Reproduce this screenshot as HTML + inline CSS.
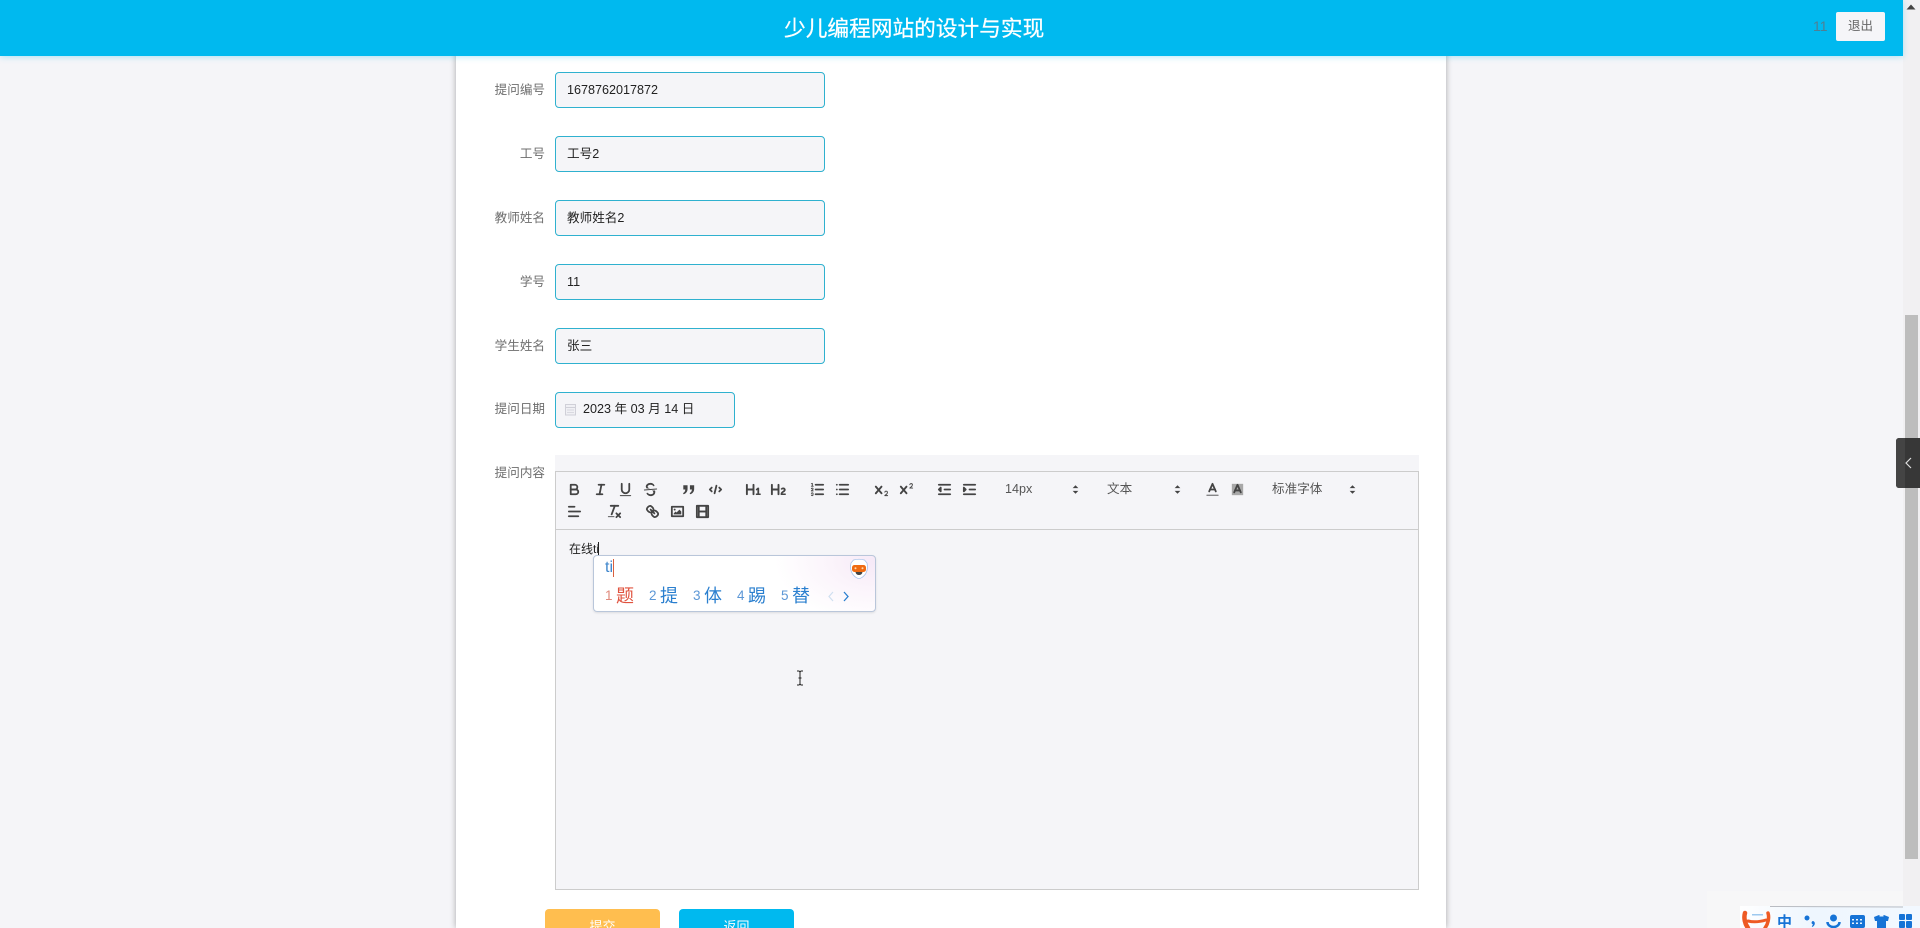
<!DOCTYPE html>
<html lang="zh-CN">
<head>
<meta charset="utf-8">
<title>少儿编程网站的设计与实现</title>
<style>
html,body{margin:0;padding:0;width:1920px;height:928px;overflow:hidden;background:#f5f5f8;}
body{position:relative;font-family:"Liberation Sans","Noto Sans CJK SC",sans-serif;}
.a{position:absolute;}
#hdr{left:0;top:0;width:1903px;height:56px;background:#00b9ef;box-shadow:0 1px 6px rgba(0,185,239,.3);z-index:5;}
#ttl{left:784px;top:14px;width:264px;height:30px;line-height:30px;font-size:21.7px;color:#fff;white-space:nowrap;-webkit-text-stroke:.25px #fff;}
#uid{left:1813px;top:17px;font-size:14px;line-height:18px;color:#4f7f94;}
#out{left:1836px;top:12px;width:49px;height:29px;background:#f5f5f8;border-radius:2px;text-align:center;line-height:29px;font-size:12.5px;color:#666;}
#panel{left:456px;top:0;width:990px;height:928px;background:#fff;box-shadow:0 0 6px rgba(0,0,0,.32);}
.lb{width:60px;left:485px;text-align:right;font-size:12.6px;line-height:18px;color:#6e6e6e;white-space:nowrap;}
.in{left:555px;width:270px;height:36px;box-sizing:border-box;background:#f5f5f8;border:1px solid #2fb1cf;border-radius:4px;font-size:12.6px;line-height:34px;color:#222;padding-left:11px;white-space:nowrap;}
#ed0{left:555px;top:455px;width:864px;height:16px;background:#f5f5f8;}
#ed{left:555px;top:471px;width:864px;height:419px;box-sizing:border-box;background:#f5f5f8;border:1px solid #ccc;}
#div{left:555px;top:529px;width:864px;height:1px;background:#ccc;}
svg.i{position:absolute;width:17px;height:17px;overflow:visible;}
svg.i .s{fill:none;stroke:#444;stroke-width:1.9;stroke-linecap:round;stroke-linejoin:round;}
svg.i .t{fill:none;stroke:#444;stroke-width:1;stroke-linecap:round;}
svg.i .f{fill:#444;stroke:none;}
.tx{font-size:12.6px;line-height:16px;color:#555;white-space:nowrap;}
#etx{left:569px;top:541px;font-size:12px;line-height:16px;color:#222;white-space:nowrap;}
#ime{left:593px;top:555px;width:283px;height:57px;box-sizing:border-box;border:1px solid #b9c6da;border-radius:4px;background:radial-gradient(ellipse 100px 60px at 100% 10%,#f6e9f7 0%,#fbf4fb 45%,#fff 100%);box-shadow:0 1px 2px rgba(0,0,0,.1);z-index:3;}
.n{font-size:13.5px;line-height:20px;color:#5c97d6;white-space:nowrap;}
.c{font-size:18px;line-height:22px;color:#2a7fcf;white-space:nowrap;}
.btn{top:909px;width:115px;height:40px;border-radius:4px;text-align:center;color:#fff;font-size:13px;line-height:36px;}
#sb{left:1903px;top:0;width:17px;height:928px;background:#f1f0f2;}
#th{left:1905px;top:315px;width:13px;height:544px;background:#bdbdbd;}
#tab{left:1896px;top:438px;width:24px;height:50px;background:#373737;border-radius:3px 0 0 3px;z-index:6;}
#tab2{left:1896px;top:438px;width:9px;height:50px;background:#444;border-radius:3px 0 0 3px;z-index:6;}
#bar0{left:1707px;top:891px;width:196px;height:37px;background:#f7f7f8;}
#bar{left:1740px;top:906px;width:180px;height:22px;overflow:hidden;background:linear-gradient(90deg,#fff,#eef6fe 40%,#f2f8ff);box-sizing:border-box;z-index:7;}
</style>
</head>
<body>
<div class="a" id="panel"></div>

<div class="a" id="hdr"></div>
<div class="a" id="ttl" style="z-index:6">少儿编程网站的设计与实现</div>
<div class="a" id="uid" style="z-index:6">11</div>
<div class="a" id="out" style="z-index:6">退出</div>

<div class="a lb" style="top:81px">提问编号</div>
<div class="a in" style="top:72px">1678762017872</div>
<div class="a lb" style="top:145px">工号</div>
<div class="a in" style="top:136px">工号2</div>
<div class="a lb" style="top:209px">教师姓名</div>
<div class="a in" style="top:200px">教师姓名2</div>
<div class="a lb" style="top:273px">学号</div>
<div class="a in" style="top:264px">11</div>
<div class="a lb" style="top:337px">学生姓名</div>
<div class="a in" style="top:328px">张三</div>
<div class="a lb" style="top:400px">提问日期</div>
<div class="a in" style="top:392px;width:180px;padding-left:27px;line-height:33px">2023 年 03 月 14 日</div>
<svg class="a" style="left:564px;top:403px" width="13" height="13" viewBox="0 0 13 13"><rect x="1.500" y="1.500" width="10" height="10.500" fill="#f0f0f4" stroke="#d0d0d8"/><line x1="1" y1="4.500" x2="12" y2="4.500" stroke="#d0d0d8"/><line x1="3" y1="7" x2="10" y2="7" stroke="#d9d9e0"/><line x1="3" y1="9.500" x2="10" y2="9.500" stroke="#d9d9e0"/></svg>
<div class="a lb" style="top:464px">提问内容</div>

<div class="a" id="ed0"></div>
<div class="a" id="ed"></div>
<div class="a" id="div"></div>

<!-- toolbar row 1 -->
<svg class="i" style="left:565.5px;top:480.5px" viewBox="0 0 18 18"><path class="s" d="M5,4H9.5A2.5,2.5,0,0,1,12,6.5v0A2.5,2.5,0,0,1,9.5,9H5V4Z"/><path class="s" d="M5,9h5.5A2.5,2.5,0,0,1,13,11.5v0A2.5,2.5,0,0,1,10.5,14H5V9Z"/></svg>
<svg class="i" style="left:591.5px;top:480.5px" viewBox="0 0 18 18"><line class="s" x1="7" x2="13" y1="4" y2="4"/><line class="s" x1="5" x2="11" y1="14" y2="14"/><line class="s" x1="8" x2="10" y1="14" y2="4"/></svg>
<svg class="i" style="left:617px;top:480.5px" viewBox="0 0 18 18"><path class="s" d="M5,3V9a4,4,0,0,0,4,4H9a4,4,0,0,0,4-4V3"/><rect class="f" height="1" rx=".5" ry=".5" width="12" x="3" y="15"/></svg>
<svg class="i" style="left:641.5px;top:480.5px" viewBox="0 0 18 18"><line class="t" x1="15.5" x2="2.5" y1="8.5" y2="9.5"/><path class="f" d="M9.007,8C6.542,7.471,6,6.785,6,6S7.007,4,9,4c1.327,0,2.25.392,2.7,1.1.206.325.644.736,1.18.3.454-.369.309-.9.1-1.2C12.25,3.09,10.9,2,9,2,6.3,2,4,3.7,4,6a3.47,3.47,0,0,0,.94,2Z"/><path class="f" d="M12.783,10H10.6A2.3,2.3,0,0,1,12,12c0,1.1-1.007,2-3,2a3.2,3.2,0,0,1-2.7-1.1c-.206-.325-.644-.736-1.18-.3-.454.369-.309.9-.1,1.2C5.75,14.91,7.1,16,9,16c2.7,0,5-1.7,5-4a3.47,3.47,0,0,0-.217-2Z"/></svg>
<svg class="i" style="left:680px;top:480.5px" viewBox="0 0 18 18"><path class="f" d="M3.500,4.500H8V8.500C8,11.500,6,13.500,3.800,14L3.200,12.800C4.700,12.200,5.500,11,5.600,9H3.500Z"/><path class="f" d="M10.500,4.500H15V8.500C15,11.500,13,13.500,10.800,14L10.200,12.800C11.700,12.200,12.500,11,12.600,9H10.500Z"/></svg>
<svg class="i" style="left:706.5px;top:480.5px" viewBox="0 0 18 18"><polyline class="s" points="5 7 3 9 5 11"/><polyline class="s" points="13 7 15 9 13 11"/><line class="s" x1="10" x2="8" y1="5" y2="13"/></svg>
<svg class="i" style="left:744.5px;top:480.5px" viewBox="0 0 18 18"><path class="f" d="M10,4V14a1,1,0,0,1-2,0V10H3v4a1,1,0,0,1-2,0V4A1,1,0,0,1,3,4V8H8V4a1,1,0,0,1,2,0Zm6.06787,9.209H14.98975V7.59863a.54085.54085,0,0,0-.605-.60547h-.62744a1.01119,1.01119,0,0,0-.748.29688L11.645,8.56641a.5435.5435,0,0,0-.022.8584l.28613.30762a.53861.53861,0,0,0,.84717.0332l.09912-.08789a1.2137,1.2137,0,0,0,.2417-.35254h.02246s-.01123.30859-.01123.60547V13.209H12.041a.54085.54085,0,0,0-.605.60547v.43945a.54085.54085,0,0,0,.605.60547h4.02686a.54085.54085,0,0,0,.605-.60547v-.43945A.54085.54085,0,0,0,16.06787,13.209Z"/></svg>
<svg class="i" style="left:770px;top:480.5px" viewBox="0 0 18 18"><path class="f" d="M16.73975,13.81445v.43945a.54085.54085,0,0,1-.605.60547H11.855a.58392.58392,0,0,1-.64893-.60547V14.0127c0-2.90527,3.39941-3.42187,3.39941-4.55469a.77675.77675,0,0,0-.84717-.78125,1.17684,1.17684,0,0,0-.83594.38477c-.2749.26367-.561.374-.85791.13184l-.4292-.34082c-.30811-.24219-.38525-.51758-.1543-.81445a2.97155,2.97155,0,0,1,2.45361-1.17676,2.45393,2.45393,0,0,1,2.68408,2.40918c0,2.45312-3.1792,2.92676-3.27832,3.93848h2.79443A.54085.54085,0,0,1,16.73975,13.81445ZM9,3A.99974.99974,0,0,0,8,4V8H3V4A1,1,0,0,0,1,4V14a1,1,0,0,0,2,0V10H8v4a1,1,0,0,0,2,0V4A.99974.99974,0,0,0,9,3Z"/></svg>
<svg class="i" style="left:808.5px;top:480.5px" viewBox="0 0 18 18"><line class="s" x1="7" x2="15" y1="4" y2="4"/><line class="s" x1="7" x2="15" y1="9" y2="9"/><line class="s" x1="7" x2="15" y1="14" y2="14"/><line class="t" x1="2.5" x2="4.5" y1="5.5" y2="5.5"/><path class="f" d="M3.5,6A0.5,0.5,0,0,1,3,5.5V3.085l-0.276.138A0.5,0.5,0,0,1,2.053,3c-0.124-.247-0.023-0.324.224-0.447l1-.5A0.5,0.5,0,0,1,4,2.5v3A0.5,0.5,0,0,1,3.5,6Z"/><path class="t" d="M4.5,10.5h-2c0-.234,1.85-1.076,1.85-2.234A0.959,0.959,0,0,0,2.5,8.156"/><path class="t" d="M2.5,14.846a0.959,0.959,0,0,0,1.85-.109A0.7,0.7,0,0,0,3.75,14a0.688,0.688,0,0,0,.6-0.736,0.959,0.959,0,0,0-1.85-.109"/></svg>
<svg class="i" style="left:833.5px;top:480.5px" viewBox="0 0 18 18"><line class="s" x1="6" x2="15" y1="4" y2="4"/><line class="s" x1="6" x2="15" y1="9" y2="9"/><line class="s" x1="6" x2="15" y1="14" y2="14"/><line class="s" x1="3" x2="3" y1="4" y2="4"/><line class="s" x1="3" x2="3" y1="9" y2="9"/><line class="s" x1="3" x2="3" y1="14" y2="14"/></svg>
<svg class="i" style="left:872.5px;top:480.5px" viewBox="0 0 18 18"><path class="f" d="M15.5,15H13.861a3.858,3.858,0,0,0,1.914-2.975,1.8,1.8,0,0,0-1.6-1.751A1.921,1.921,0,0,0,12.021,11.7a0.50013,0.50013,0,1,0,.957.291h0a0.914,0.914,0,0,1,1.053-.725,0.81,0.81,0,0,1,.744.762c0,1.076-1.16971,1.86982-1.93971,2.43082A1.45639,1.45639,0,0,0,12,15.5a0.5,0.5,0,0,0,.5.5h3A0.5,0.5,0,0,0,15.5,15Z"/><path class="f" d="M9.65,5.241a1,1,0,0,0-1.409.108L6,7.964,3.759,5.349A1,1,0,0,0,2.192,6.59178Q2.21541,6.6213,2.241,6.649L4.684,9.5,2.241,12.35A1,1,0,0,0,3.71,13.70722q0.02557-.02768.049-0.05722L6,11.036,8.241,13.65a1,1,0,1,0,1.567-1.24277Q9.78459,12.3777,9.759,12.35L7.316,9.5,9.759,6.651A1,1,0,0,0,9.65,5.241Z"/></svg>
<svg class="i" style="left:897.5px;top:480.5px" viewBox="0 0 18 18"><path class="f" d="M15.5,7H13.861a4.015,4.015,0,0,0,1.914-2.975,1.8,1.8,0,0,0-1.6-1.751A1.922,1.922,0,0,0,12.021,3.7a0.5,0.5,0,1,0,.957.291,0.917,0.917,0,0,1,1.053-.725,0.81,0.81,0,0,1,.744.762c0,1.077-1.164,1.925-1.934,2.486A1.423,1.423,0,0,0,12,7.5a0.5,0.5,0,0,0,.5.5h3A0.5,0.5,0,0,0,15.5,7Z"/><path class="f" d="M9.651,5.241a1,1,0,0,0-1.41.108L6,7.964,3.759,5.349a1,1,0,1,0-1.519,1.3L4.683,9.5,2.241,12.35a1,1,0,1,0,1.519,1.3L6,11.036,8.241,13.65a1,1,0,0,0,1.519-1.3L7.317,9.5,9.759,6.651A1,1,0,0,0,9.651,5.241Z"/></svg>
<svg class="i" style="left:936px;top:480.5px" viewBox="0 0 18 18"><line class="s" x1="3" x2="15" y1="14" y2="14"/><line class="s" x1="3" x2="15" y1="4" y2="4"/><line class="s" x1="9" x2="15" y1="9" y2="9"/><polyline class="s" style="fill:#444" points="5 7 5 11 3 9 5 7"/></svg>
<svg class="i" style="left:961px;top:480.5px" viewBox="0 0 18 18"><line class="s" x1="3" x2="15" y1="14" y2="14"/><line class="s" x1="3" x2="15" y1="4" y2="4"/><line class="s" x1="9" x2="15" y1="9" y2="9"/><polyline class="s" style="fill:#444" points="3 7 3 11 5 9 3 7"/></svg>

<div class="a tx" style="left:1005px;top:481px">14px</div>
<svg class="i" style="left:1066.5px;top:480.5px" viewBox="0 0 18 18"><polygon class="f" points="6 10.500 9 13.500 12 10.500"/><polygon class="f" points="6 7.500 9 4.500 12 7.500"/></svg>
<div class="a tx" style="left:1107px;top:481px">文本</div>
<svg class="i" style="left:1168.5px;top:480.5px" viewBox="0 0 18 18"><polygon class="f" points="6 10.500 9 13.500 12 10.500"/><polygon class="f" points="6 7.500 9 4.500 12 7.500"/></svg>
<svg class="i" style="left:1203.5px;top:480.5px" viewBox="0 0 18 18"><line class="t" x1="3" x2="15" y1="15" y2="15"/><polyline class="s" points="5.5 11 9 3 12.5 11"/><line class="s" x1="11.63" x2="6.38" y1="9" y2="9"/></svg>
<svg class="i" style="left:1228.5px;top:480.5px" viewBox="0 0 18 18"><rect x="3" y="3" width="12" height="12" fill="#a8a8a8"/><polyline class="s" points="5.500 12 9 4 12.500 12"/><line class="s" x1="11.63" x2="6.38" y1="10" y2="10"/></svg>
<div class="a tx" style="left:1272px;top:481px">标准字体</div>
<svg class="i" style="left:1343.5px;top:480.5px" viewBox="0 0 18 18"><polygon class="f" points="6 10.500 9 13.500 12 10.500"/><polygon class="f" points="6 7.500 9 4.500 12 7.500"/></svg>

<!-- toolbar row 2 -->
<svg class="i" style="left:565.5px;top:502.5px" viewBox="0 0 18 18"><line class="s" x1="3" x2="15" y1="9" y2="9"/><line class="s" x1="3" x2="13" y1="14" y2="14"/><line class="s" x1="3" x2="9" y1="4" y2="4"/></svg>
<svg class="i" style="left:606px;top:502.5px" viewBox="0 0 18 18"><line class="s" x1="5" x2="13" y1="3" y2="3"/><line class="s" x1="6" x2="9.35" y1="12" y2="3"/><line class="s" x1="11" x2="15" y1="11" y2="15"/><line class="s" x1="15" x2="11" y1="11" y2="15"/><rect class="f" height="1" rx=".5" ry=".5" width="7" x="2" y="14"/></svg>
<svg class="i" style="left:644px;top:502.5px" viewBox="0 0 18 18"><line class="s" x1="7" x2="11" y1="7" y2="11"/><path class="s" d="M8.9,4.577a3.476,3.476,0,0,1,.36,4.679A3.476,3.476,0,0,1,4.577,8.9C3.185,7.5,2.035,6.4,4.217,4.217S7.5,3.185,8.9,4.577Z"/><path class="s" d="M13.423,9.1a3.476,3.476,0,0,0-4.679-.36,3.476,3.476,0,0,0,.36,4.679c1.392,1.392,2.5,2.542,4.679.36S14.815,10.5,13.423,9.1Z"/></svg>
<svg class="i" style="left:669px;top:502.5px" viewBox="0 0 18 18"><rect class="s" height="10" width="12" x="3" y="4"/><circle class="f" cx="6" cy="7" r="1"/><polyline class="f" points="5 12 5 11 7 9 8 10 11 7 13 9 13 12 5 12"/></svg>
<svg class="i" style="left:694px;top:502.5px" viewBox="0 0 18 18"><rect class="s" height="12" width="12" x="3" y="3"/><rect class="f" height="12" width="2" x="4" y="3"/><rect class="f" height="12" width="2" x="12" y="3"/><rect class="f" height="2" width="8" x="5" y="8"/></svg>

<!-- editor text -->
<div class="a" id="etx">在线ti</div>
<div class="a" style="left:598px;top:542px;width:1px;height:15px;background:#222"></div>

<!-- IME popup -->
<div class="a" id="ime"></div>
<div class="a" style="left:605px;top:558px;font-size:16px;line-height:20px;color:#3f86cc;z-index:4">ti</div>
<div class="a" style="left:612.500px;top:559px;width:1px;height:18px;background:#d9603f;z-index:4"></div>
<svg class="a" style="left:849px;top:558px;z-index:4" width="20" height="22" viewBox="0 0 20 22"><path d="M2,5 L4.500,2 Q10,0.500 15.500,2 L18,5 Q19.500,11 16.500,16 Q13,20.500 10,20.500 Q7,20.500 3.500,16 Q0.500,11 2,5Z" fill="#fff" stroke="#a9c3ea" stroke-width=".8"/><rect x="3" y="7" width="14" height="7" rx="2.500" fill="#ef6a12"/><circle cx="6.500" cy="10.300" r="1" fill="#ffd9b0"/><circle cx="13.500" cy="10.300" r="1" fill="#ffd9b0"/><path d="M6.500,14 H13.500 Q13,17 10,17 Q7,17 6.500,14Z" fill="#444"/></svg>

<div class="a n" style="left:605px;top:586px;color:#e08a7c;z-index:4">1</div>
<div class="a c" style="left:616px;top:585px;color:#e0533f;z-index:4">题</div>
<div class="a n" style="left:649px;top:586px;z-index:4">2</div>
<div class="a c" style="left:660px;top:585px;z-index:4">提</div>
<div class="a n" style="left:693px;top:586px;z-index:4">3</div>
<div class="a c" style="left:704px;top:585px;z-index:4">体</div>
<div class="a n" style="left:737px;top:586px;z-index:4">4</div>
<div class="a c" style="left:748px;top:585px;z-index:4">踢</div>
<div class="a n" style="left:781px;top:586px;z-index:4">5</div>
<div class="a c" style="left:792px;top:585px;z-index:4">替</div>
<svg class="a" style="left:827px;top:591px;z-index:4" width="24" height="11" viewBox="0 0 24 11"><polyline points="6,1 2,5.500 6,10" fill="none" stroke="#cfdff0" stroke-width="1.2"/><polyline points="17,1 21,5.500 17,10" fill="none" stroke="#2a7fcf" stroke-width="1.3"/></svg>

<!-- I-beam cursor -->
<svg class="a" style="left:796px;top:670px" width="8" height="16" viewBox="0 0 8 16"><path d="M1,1H3L4,2L5,1H7M4,2V14M1,15H3L4,14L5,15H7M2.500,8H5.500" fill="none" stroke="#222" stroke-width="1"/></svg>

<!-- buttons -->
<div class="a btn" style="left:545px;background:#ffbe4f">提交</div>
<div class="a btn" style="left:679px;background:#00b9ef">返回</div>

<!-- scrollbar -->
<div class="a" id="sb"></div>
<div class="a" id="th"></div>
<svg class="a" style="left:1906px;top:4px" width="10" height="6" viewBox="0 0 10 6"><polygon points="5,0.500 9.500,5.500 0.500,5.500" fill="#444"/></svg>

<!-- side tab -->
<div class="a" id="tab"></div>
<div class="a" id="tab2"></div>
<svg class="a" style="left:1904px;top:457px;z-index:7" width="9" height="12" viewBox="0 0 9 12"><polyline points="7,1 2,6 7,11" fill="none" stroke="#ddd" stroke-width="1.2"/></svg>

<!-- IME status bar -->
<div class="a" id="bar0"></div>
<div class="a" id="bar"></div>
<svg class="a" style="left:1740px;top:906px;z-index:8" width="180" height="22" viewBox="0 0 180 22">
<line x1="30" y1="0.500" x2="163" y2="1" stroke="#b9bcc2" stroke-width="1"/>
<rect x="12" y="8" width="11" height="1.500" fill="#9ec9ef"/>
<g fill="none" stroke="#ee5a24" stroke-linecap="round">
<path d="M5,7 C3.500,12 5,18 8,22" stroke-width="4.500"/>
<path d="M28,7 C29.500,12 28,18 25,22" stroke-width="3.500"/>
<path d="M8,15 Q16,17 26,14" stroke-width="3"/>
</g>
<text x="37" y="21" font-size="15" font-weight="700" fill="#1673d6" font-family="Liberation Sans,Noto Sans CJK SC,sans-serif">中</text>
<g fill="#1673d6">
<circle cx="67" cy="12" r="2.500"/>
<path d="M73,15 q2,.5 1.800,2.800 q-.3,2 -2.300,3.200 l-.7,-.8 q1,-.9 1.100,-1.900 q-1.500,-.3 -1.300,-1.900 q.3,-1.300 1.400,-1.400Z"/>
<circle cx="93.500" cy="12" r="3.500"/>
<rect x="110" y="9" width="15" height="13" rx="2"/>
<path d="M134,11 L139,9 H144 L149,11 L148,15 H146 V22 H137 V15 H135Z"/>
<rect x="159" y="8" width="6" height="6" rx="1"/><rect x="166" y="8" width="6" height="6" rx="1"/>
<rect x="159" y="15" width="6" height="7" rx="1"/><rect x="166" y="15" width="6" height="7" rx="1"/>
</g>
<path d="M87.500,16 a6,5 0 0 0 12,0" fill="none" stroke="#1673d6" stroke-width="2.500"/>
<g fill="#eaf4ff"><rect x="112" y="13" width="2" height="1.500"/><rect x="116" y="13" width="2" height="1.500"/><rect x="120" y="13" width="2" height="1.500"/><rect x="112" y="16.500" width="2" height="1.500"/><rect x="116" y="16.500" width="2" height="1.500"/><rect x="120" y="16.500" width="2" height="1.500"/><rect x="139.500" y="9" width="4" height="1.500"/></g>
</svg>
</body>
</html>
